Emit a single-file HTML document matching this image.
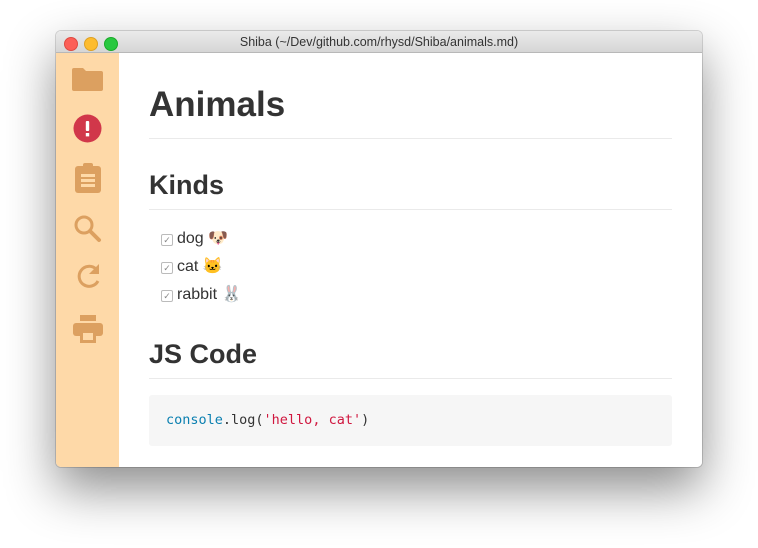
<!DOCTYPE html>
<html><head><style>
body{margin:0;width:758px;height:548px;background:#fff;position:relative;overflow:hidden;font-family:"Liberation Sans",sans-serif}
.win{position:absolute;left:56px;top:31px;width:646px;height:436px;border-radius:5px;overflow:hidden;box-shadow:0 22px 50px rgba(0,0,0,.45),0 0 0 1px rgba(0,0,0,.15)}
.tb{height:22px;background:linear-gradient(#ebebeb,#d6d6d6);border-bottom:1px solid #b8b8b8;box-sizing:border-box;text-align:center;font-size:12.5px;line-height:22px;color:#333}
.dot{position:absolute;top:6px;width:12px;height:12px;border-radius:50%}
.side{position:absolute;left:0;top:22px;width:63px;bottom:0;background:#fed9a8}
.ic{position:absolute;left:16px}
.main{position:absolute;left:63px;top:22px;right:0;bottom:0;background:#fff}
h1,h2{margin:0;position:absolute;left:30px;right:30px;color:#333;font-weight:bold;border-bottom:1px solid #eaeaea}
.li{position:absolute;left:42px;font-size:16px;color:#333}
.cb{position:absolute;left:42px;width:10px;height:10px;border:1px solid #bbb;border-radius:2px;font-size:9px;color:#888;line-height:10px;text-align:center}
</style></head><body>
<div class="win">
<div class="tb">Shiba (~/Dev/github.com/rhysd/Shiba/animals.md)</div>
<div class="dot" style="left:8px;background:#fc5f57;border:0.5px solid #de4a41"></div>
<div class="dot" style="left:28px;background:#fdbc2e;border:0.5px solid #dea123"></div>
<div class="dot" style="left:48px;background:#29c840;border:0.5px solid #1aab29"></div>
<div class="side">
<svg class="ic" style="top:14px" width="31" height="24" viewBox="0 0 31 24"><path d="M2 1h9l3 3h15a2 2 0 0 1 2 2v16a2 2 0 0 1-2 2H2a2 2 0 0 1-2-2V3a2 2 0 0 1 2-2z" fill="#dca060"/></svg>
<svg class="ic" style="top:61px;left:17px" width="29" height="29" viewBox="0 0 29 29"><circle cx="14.5" cy="14.5" r="14" fill="#d1374a"/><rect x="12.8" y="7" width="3.4" height="10" rx="1" fill="#fff"/><rect x="12.8" y="19" width="3.4" height="3.4" fill="#fff"/></svg>
<svg class="ic" style="top:110px;left:19px" width="26" height="30" viewBox="0 0 26 30"><rect x="0" y="3" width="26" height="27" rx="3" fill="#dca060"/><rect x="8" y="0" width="10" height="6" rx="2" fill="#dca060"/><rect x="6" y="11" width="14" height="3" fill="#fed9a8"/><rect x="6" y="16" width="14" height="3" fill="#fed9a8"/><rect x="6" y="21" width="14" height="3" fill="#fed9a8"/></svg>
<svg class="ic" style="top:162px;left:18px" width="28" height="28" viewBox="0 0 28 28"><circle cx="10" cy="10" r="8" fill="none" stroke="#dca060" stroke-width="3"/><path d="M16 16l9 9" stroke="#dca060" stroke-width="4" stroke-linecap="round"/></svg>
<svg class="ic" style="top:209px;left:19px" width="28" height="28" viewBox="0 0 28 28"><path d="M21 7A10 10 0 1 0 23 19" fill="none" stroke="#dca060" stroke-width="3"/><path d="M24 2v10H14z" fill="#dca060"/></svg>
<svg class="ic" style="top:262px;left:17px" width="30" height="28" viewBox="0 0 30 28"><rect x="7" y="0" width="16" height="6" fill="#dca060"/><rect x="0" y="8" width="30" height="13" rx="3" fill="#dca060"/><rect x="7" y="16" width="16" height="12" fill="#dca060"/><rect x="10" y="18" width="10" height="7" fill="#fed9a8"/></svg>
</div>
<div class="main">
<h1 style="top:31px;height:54px;font-size:35px;line-height:42px">Animals</h1>
<h2 style="top:114px;height:42px;font-size:27px;line-height:36px">Kinds</h2>
<div class="cb" style="top:181px">✓</div><div class="li" style="left:58px;top:175px">dog 🐶</div>
<div class="cb" style="top:209px">✓</div><div class="li" style="left:58px;top:203px">cat 🐱</div>
<div class="cb" style="top:237px">✓</div><div class="li" style="left:58px;top:231px">rabbit 🐰</div>
<h2 style="top:283px;height:42px;font-size:27px;line-height:36px">JS Code</h2>
<div style="position:absolute;left:30px;right:30px;top:342px;height:51px;background:#f6f6f6;border-radius:3px;font-family:'DejaVu Sans Mono','Liberation Mono',monospace;font-size:13.5px;line-height:51px;padding-left:17px;color:#333"><span style="color:#0a7fb0">console</span>.log(<span style="color:#d0173f">'hello, cat'</span>)</div>
</div>
</div>
</body></html>
